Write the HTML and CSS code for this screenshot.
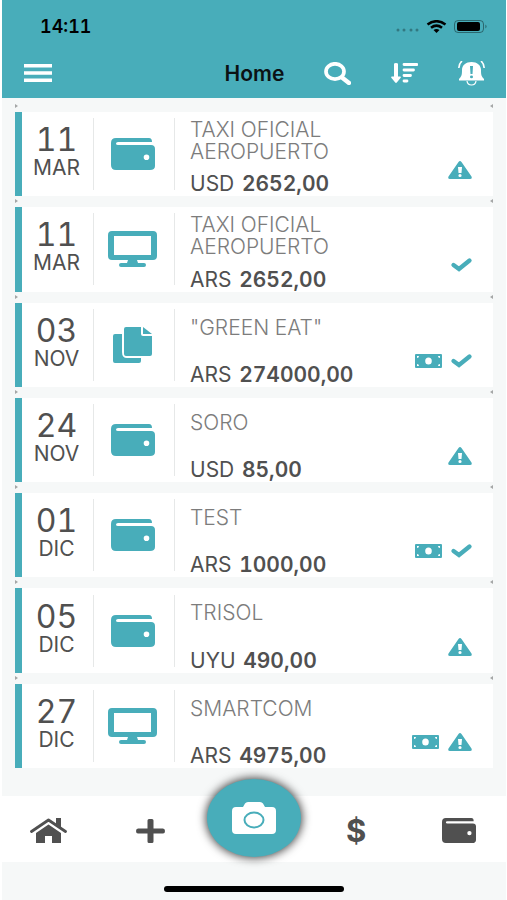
FILE: index.html
```html
<!DOCTYPE html>
<html lang="es">
<head>
<meta charset="utf-8">
<meta name="viewport" content="width=device-width, initial-scale=1">
<title>Home</title>
<link rel="stylesheet" href="styles.css">
</head>
<body>
<svg class="sprite" aria-hidden="true">
  <symbol id="wallet" viewBox="0 0 44 32" preserveAspectRatio="none">
    <path fill-rule="evenodd" d="M5 0H38Q41 0 41 4H7Q5 4 5 5.500Q5 7 7 7H40Q44 7 44 11V28Q44 32 39 32H5Q0 32 0 27V5Q0 0 5 0ZM35.500 16.500A2.800 2.800 0 1 0 35.500 22.100A2.800 2.800 0 1 0 35.500 16.500Z"/>
  </symbol>
  <symbol id="monitor" viewBox="0 0 49 36" preserveAspectRatio="none">
    <path fill-rule="evenodd" d="M4 0H45Q49 0 49 4V25Q49 29 45 29H29L30 32H36Q38 32 38 34T36 36H13Q11 36 11 34T13 32H19L20 29H4Q0 29 0 25V4Q0 0 4 0ZM6 5V24H43V5Z"/>
  </symbol>
  <symbol id="copy" viewBox="0 0 39 36" preserveAspectRatio="none">
    <path d="M2 7H9V25Q9 31 14 31H28V34Q28 36 26 36H2Q0 36 0 34V9Q0 7 2 7Z"/>
    <path d="M13 0H28V7Q28 9 30 9H39V27Q39 29 37 29H13Q11 29 11 27V2Q11 0 13 0Z"/>
    <path d="M30 0L39 7H30Z"/>
  </symbol>
  <symbol id="warning" viewBox="0 0 24 18" preserveAspectRatio="none">
    <path fill-rule="evenodd" d="M10.500 1Q12 -1 13.500 1L23.500 15.500Q24.500 18 22 18H2Q-.5 18 .5 15.500ZM10 6L10.500 12H13.500L14 6ZM12 13A1.600 1.500 0 1 0 12 16A1.600 1.500 0 1 0 12 13Z"/>
  </symbol>
  <symbol id="check" viewBox="0 0 21 14" preserveAspectRatio="none">
    <path d="M2.500 7L8 11L18.500 2.500" fill="none" stroke="currentColor" stroke-width="4.200" stroke-linejoin="miter" stroke-linecap="round"/>
  </symbol>
  <symbol id="money" viewBox="0 0 27 14" preserveAspectRatio="none">
    <path fill-rule="evenodd" d="M1 0H26Q27 0 27 1V13Q27 14 26 14H1Q0 14 0 13V1Q0 0 1 0ZM13.500 3.500A3.300 3.500 0 1 0 13.500 10.500A3.300 3.500 0 1 0 13.500 3.500ZM2 2V4Q4 4 4 2ZM23 2Q23 4 25 4V2ZM2 10V12H4Q4 10 2 10ZM25 10Q23 10 23 12H25Z"/>
  </symbol>
</svg>

<div class="app">
  <header class="header">
    <div class="status">
      <span class="time">14:11</span>
      <div class="signals">
        <svg class="dots" viewBox="0 0 23 4"><circle cx="2" cy="2" r="1.500"/><circle cx="8" cy="2" r="1.500"/><circle cx="15" cy="2" r="1.500"/><circle cx="21" cy="2" r="1.500"/></svg>
        <svg class="wifi" viewBox="0 0 21 13" preserveAspectRatio="none"><path d="M1.500 4.500Q10.500 -2 19.500 4.500M5 7.800Q10.500 3.600 16 7.800" fill="none" stroke="#000" stroke-width="2.600"/><path d="M7.500 10Q10.500 8 13.500 10L10.500 13Z"/></svg>
        <svg class="battery" viewBox="0 0 34 13"><rect x=".5" y=".5" width="29" height="12" rx="3.500" fill="none" stroke="#000" stroke-opacity=".4"/><rect x="3" y="2" width="23" height="9" rx="2"/><path d="M31.500 4.500Q33.500 6.500 31.500 8.500Z" opacity=".5"/></svg>
      </div>
    </div>
    <div class="toolbar">
      <button class="icon-button" aria-label="Menu"><svg class="menu" viewBox="0 0 28 18" preserveAspectRatio="none"><path d="M0 0H28V3.500H0ZM0 7.200H28V10.700H0ZM0 14.500H28V18H0Z"/></svg></button>
      <h1>Home</h1>
      <div class="actions">
        <button class="icon-button" aria-label="Buscar"><svg class="search" viewBox="0 0 27 23" preserveAspectRatio="none"><ellipse cx="11" cy="9.500" rx="9" ry="7.700" fill="none" stroke="currentColor" stroke-width="3.700"/><path d="M18 15.500L25 21" stroke="currentColor" stroke-width="4.400" stroke-linecap="round"/></svg></button>
        <button class="icon-button" aria-label="Ordenar"><svg class="sort" viewBox="0 0 27 20" preserveAspectRatio="none"><path d="M3 1Q3 0 5 0T7 1V13.500H9Q10.500 13.500 9.500 15L6 19.300Q5 20.500 4 19.300L.5 15Q-.5 13.500 1 13.500H3Z"/><path d="M13 1.500H26M13 7H22.500M13 12.500H19.500M13 18H16" fill="none" stroke="currentColor" stroke-width="2.800" stroke-linecap="round"/></svg></button>
        <button class="icon-button" aria-label="Notificaciones"><svg class="bell" viewBox="0 0 27 25" preserveAspectRatio="none"><path fill-rule="evenodd" d="M13.500 1C19 1 23 4 23 9C23 14 23.500 15.500 26 18V19.500H1V18C3.500 15.500 4 14 4 9C4 4 8 1 13.500 1ZM12 5L12.500 13H14.500L15 5ZM13.500 14.500A1.500 1.400 0 1 0 13.500 17.300A1.500 1.400 0 1 0 13.500 14.500Z"/><path d="M9 20Q9.500 24 13.500 24T18 20" fill="none" stroke="currentColor" stroke-width="1.200"/><path d="M4 0Q1 2.500 .8 7M23 0Q26 2.500 26.200 7" fill="none" stroke="currentColor" stroke-width="1.600"/></svg></button>
      </div>
    </div>
  </header>

  <main class="list">
    <article class="card">
      <div class="date"><span class="day">11</span><span class="month">MAR</span></div>
      <div class="kind"><svg class="i-wallet"><use href="#wallet"/></svg></div>
      <div class="info long"><h2>TAXI OFICIAL AEROPUERTO</h2><p>USD <strong>2652,00</strong></p></div>
      <div class="flags"><svg class="i-warning"><use href="#warning"/></svg></div>
    </article>
    <article class="card">
      <div class="date"><span class="day">11</span><span class="month">MAR</span></div>
      <div class="kind"><svg class="i-monitor"><use href="#monitor"/></svg></div>
      <div class="info long"><h2>TAXI OFICIAL AEROPUERTO</h2><p>ARS <strong>2652,00</strong></p></div>
      <div class="flags"><svg class="i-check"><use href="#check"/></svg></div>
    </article>
    <article class="card">
      <div class="date"><span class="day">03</span><span class="month">NOV</span></div>
      <div class="kind"><svg class="i-copy"><use href="#copy"/></svg></div>
      <div class="info"><h2>"GREEN EAT"</h2><p>ARS <strong>274000,00</strong></p></div>
      <div class="flags"><svg class="i-money"><use href="#money"/></svg><svg class="i-check"><use href="#check"/></svg></div>
    </article>
    <article class="card">
      <div class="date"><span class="day">24</span><span class="month">NOV</span></div>
      <div class="kind"><svg class="i-wallet"><use href="#wallet"/></svg></div>
      <div class="info"><h2>SORO</h2><p>USD <strong>85,00</strong></p></div>
      <div class="flags"><svg class="i-warning"><use href="#warning"/></svg></div>
    </article>
    <article class="card">
      <div class="date"><span class="day">01</span><span class="month">DIC</span></div>
      <div class="kind"><svg class="i-wallet"><use href="#wallet"/></svg></div>
      <div class="info"><h2>TEST</h2><p>ARS <strong>1000,00</strong></p></div>
      <div class="flags"><svg class="i-money"><use href="#money"/></svg><svg class="i-check"><use href="#check"/></svg></div>
    </article>
    <article class="card">
      <div class="date"><span class="day">05</span><span class="month">DIC</span></div>
      <div class="kind"><svg class="i-wallet"><use href="#wallet"/></svg></div>
      <div class="info"><h2>TRISOL</h2><p>UYU <strong>490,00</strong></p></div>
      <div class="flags"><svg class="i-warning"><use href="#warning"/></svg></div>
    </article>
    <article class="card">
      <div class="date"><span class="day">27</span><span class="month">DIC</span></div>
      <div class="kind"><svg class="i-monitor"><use href="#monitor"/></svg></div>
      <div class="info"><h2>SMARTCOM</h2><p>ARS <strong>4975,00</strong></p></div>
      <div class="flags"><svg class="i-money"><use href="#money"/></svg><svg class="i-warning"><use href="#warning"/></svg></div>
    </article>
  </main>

  <nav class="tabs">
    <button class="tab" aria-label="Inicio"><svg class="t-home" viewBox="0 0 37 25" preserveAspectRatio="none"><path d="M1.500 13.500L18.500 2L35.500 13.500" fill="none" stroke="currentColor" stroke-width="2.800" stroke-linejoin="round" stroke-linecap="round"/><path d="M26 0H31V10L26 6Z"/><path d="M18.500 6.500L31 15V25H22V18H15V25H6V15Z"/></svg></button>
    <button class="tab" aria-label="Agregar"><svg class="t-plus" viewBox="0 0 29 24" preserveAspectRatio="none"><path d="M13 0H16Q17.500 0 17.500 1.500V9.500H27Q29 9.500 29 12T27 14.500H17.500V22.500Q17.500 24 16 24H13Q11.500 24 11.500 22.500V14.500H2Q0 14.500 0 12T2 9.500H11.500V1.500Q11.500 0 13 0Z"/></svg></button>
    <div class="tab">
      <button class="camera" aria-label="Cámara"><svg viewBox="0 0 44 32" preserveAspectRatio="none"><path d="M4 5H11L13 1.500Q14 0 16 0H28Q30 0 31 1.500L33 5H40Q44 5 44 9V28Q44 32 40 32H4Q0 32 0 28V9Q0 5 4 5Z"/><ellipse cx="22" cy="18" rx="9.500" ry="7.500" fill="none" stroke="#48adba" stroke-width="2"/></svg></button>
    </div>
    <button class="tab dollar" aria-label="Gastos">$</button>
    <button class="tab" aria-label="Billetera"><svg class="t-wallet"><use href="#wallet"/></svg></button>
  </nav>
  <div class="home-area"><div class="home-bar"></div></div>
</div>
</body>
</html>
```
FILE: styles.css
```css
* {
  box-sizing: border-box;
}

body {
  margin: 0;
  background: #fff;
  font-family: Inter, "Liberation Sans", sans-serif;
  font-variant-numeric: tabular-nums;
  color: #505050;
}

button {
  padding: 0;
  border: 0;
  background: none;
  color: inherit;
  font: inherit;
}

h1, h2, p {
  margin: 0;
}

svg {
  display: block;
  fill: currentColor;
  flex: none;
}

.sprite {
  position: absolute;
  width: 0;
  height: 0;
}

.app {
  display: flex;
  flex-direction: column;
  min-height: 100vh;
  margin: 0 1px 0 2px;
  background: #f6f8f8;
}

.header {
  height: 98px;
  background: #48adba;
  color: #fff;
}

.status {
  display: flex;
  justify-content: space-between;
  align-items: center;
  height: 52px;
  padding: 0 18px 0 38px;
  color: #000;
}

.time {
  font-size: 18px;
  font-weight: 600;
}

.signals {
  display: flex;
  align-items: center;
  gap: 7px;
}

.dots { width: 23px; height: 4px; margin-top: 8px; opacity: .3; }
.wifi { width: 21px; height: 13px; }
.battery { width: 34px; height: 13px; }

.toolbar {
  display: grid;
  grid-template-columns: 1fr auto 1fr;
  align-items: center;
  height: 42px;
  padding: 0 21px 0 22px;
}

.toolbar h1 {
  color: #0b1214;
  font-size: 21px;
  font-weight: 600;
}

.icon-button {
  display: flex;
}

.actions {
  display: flex;
  justify-content: flex-end;
  align-items: center;
  gap: 40px;
}

.menu { width: 28px; height: 18px; }
.search { width: 27px; height: 23px; }
.sort { width: 27px; height: 20px; }
.bell { width: 27px; height: 25px; }

.list {
  flex: 1;
  display: grid;
  grid-auto-rows: 1fr;
  gap: 11px;
  padding: 14px 13px 28px;
}

.card {
  position: relative;
  display: flex;
  align-items: center;
  min-height: 84px;
  border-left: 7px solid #48adba;
  background: #fff;
}

/* Small arrow marks in the gap above each card */
.card::before,
.card::after {
  content: "";
  position: absolute;
  top: -8px;
  border: 2px solid transparent;
}

.card::before {
  left: -7px;
  border-left: 3px solid #a4a6a6;
}

.card::after {
  right: 0;
  border-right: 3px solid #a4a6a6;
}

.date,
.kind {
  display: flex;
  align-items: center;
  justify-content: center;
  height: 72px;
  border-right: 1px solid #e6e8e8;
}

.date {
  flex-direction: column;
  width: 72px;
  padding: 0 2px 4px 0;
}

.day {
  font-size: 32px;
  line-height: 32px;
}

.month {
  font-size: 21px;
  line-height: 24px;
}

.kind {
  width: 81px;
  padding-right: 3px;
  color: #48adba;
}

.info {
  flex: 1;
  display: flex;
  flex-direction: column;
  justify-content: space-between;
  align-self: stretch;
  padding: 14px 0 0 15px;
}

.info.long {
  padding-top: 7px;
}

.info h2 {
  max-width: 180px;
  color: #7c7c7c;
  font-size: 21px;
  font-weight: 300;
  line-height: 22px;
}

.info p {
  font-size: 21px;
  line-height: 24px;
}

.info strong {
  margin-left: 2px;
  font-weight: 600;
}

.flags {
  display: flex;
  align-items: center;
  gap: 9px;
  padding: 32px 21px 0 0;
  color: #48adba;
}

.i-wallet { width: 44px; height: 32px; }
.i-monitor { width: 49px; height: 36px; }
.i-copy { width: 39px; height: 36px; }
.i-warning { width: 24px; height: 18px; }
.i-check { width: 21px; height: 14px; }
.i-money { width: 27px; height: 14px; }

.tabs {
  display: flex;
  justify-content: space-between;
  height: 66px;
  margin: 0 -1px 0 -2px;
  padding: 0 29px;
  background: #fff;
}

.tab {
  position: relative;
  display: flex;
  align-items: center;
  justify-content: center;
  width: 38px;
  padding-top: 3px;
  color: #505050;
}

.dollar {
  font-size: 31px;
  font-weight: 700;
}

.t-home { width: 37px; height: 25px; }
.t-plus { width: 29px; height: 24px; }
.t-wallet { width: 34px; height: 25px; }

.camera {
  position: absolute;
  top: -17px;
  left: 50%;
  display: flex;
  align-items: center;
  justify-content: center;
  width: 94px;
  height: 78px;
  margin-left: -47px;
  border-radius: 50%;
  background: #48adba;
  box-shadow: 0 0 10px 1px rgba(0, 0, 0, .75);
  color: #fff;
}

.camera svg {
  width: 44px;
  height: 32px;
}

.home-area {
  display: flex;
  justify-content: center;
  height: 38px;
  padding-top: 24px;
}

.home-bar {
  width: 180px;
  height: 6px;
  border-radius: 3px;
  background: #000;
}
```
